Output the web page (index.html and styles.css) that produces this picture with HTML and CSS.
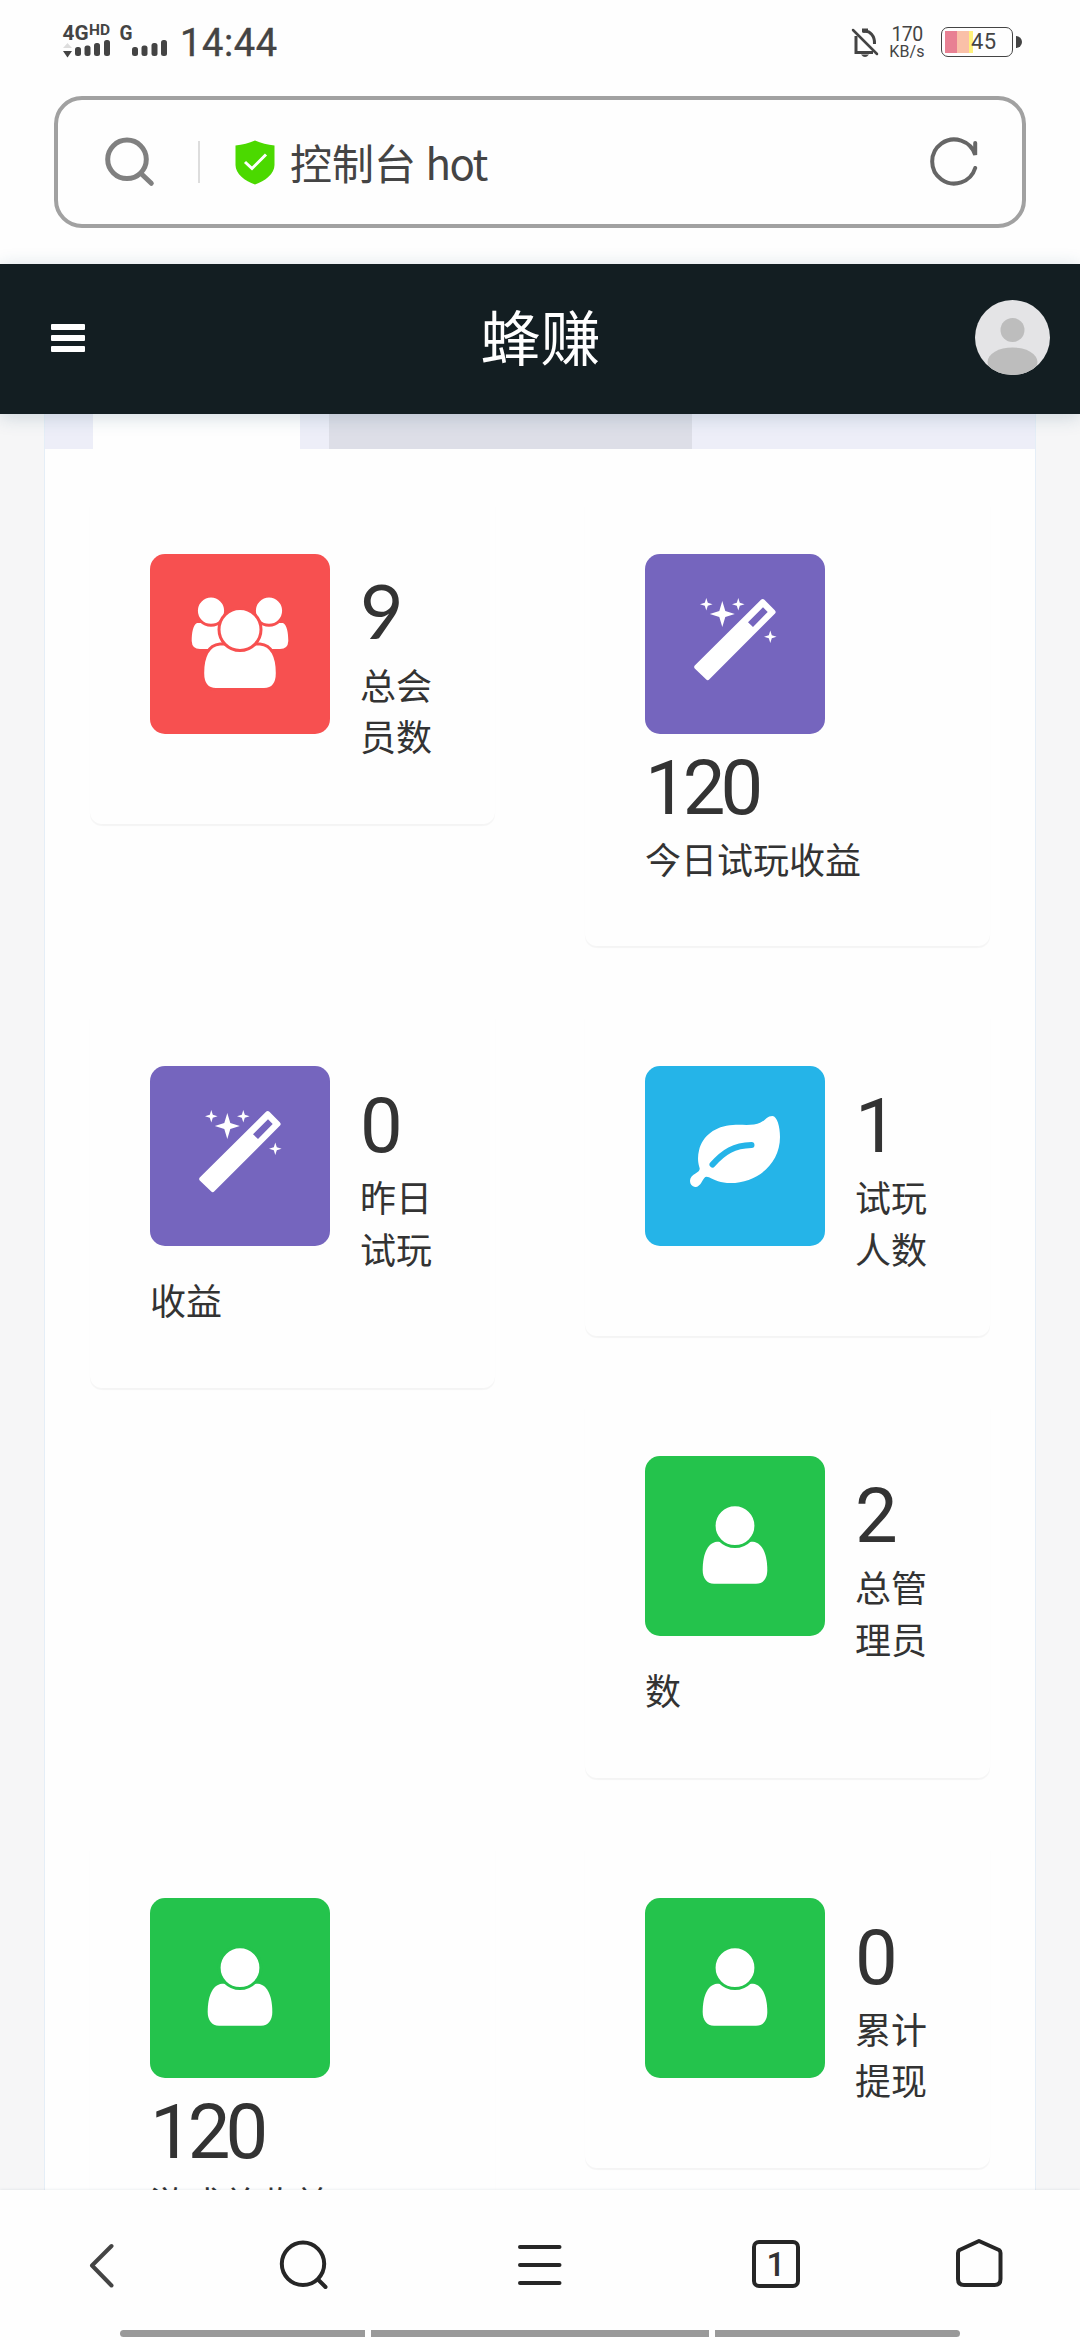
FILE: index.html
```html
<!DOCTYPE html>
<html lang="zh-CN">
<head>
<meta charset="utf-8">
<title>控制台</title>
<link rel="stylesheet" href="styles.css">
</head>
<body>
<svg class="defs" width="0" height="0" aria-hidden="true">
  <symbol id="i-user" viewBox="0 0 180 180">
    <path fill="#fff" d="M72 85.7C62 87 57.7 99 57.7 114C57.7 122 61.5 127.7 69 127.7H111C118.5 127.7 122.3 122 122.3 114C122.3 99 118 87 108 85.7Z"/>
    <circle cx="90" cy="69.7" r="20.9" fill="#fff" stroke="#24c34c" stroke-width="3"/>
  </symbol>
  <symbol id="i-users" viewBox="0 0 180 180">
    <g fill="#fff">
      <path d="M47 69C43 71 41.7 79 41.7 87Q42 95 50 95H80V69ZM133 69C137 71 138.3 79 138.3 87Q138 95 130 95H100V69Z"/>
      <g stroke="#f75050" stroke-width="3">
        <circle cx="61" cy="56.7" r="14.6"/><circle cx="119" cy="56.7" r="14.6"/>
        <path d="M70 90C58 91 52.7 103 52.7 119C52.7 129 57 135.5 66 135.5H114C123 135.5 127.3 129 127.3 119C127.3 103 122 91 110 90Z"/>
        <circle cx="90" cy="75.5" r="21"/>
      </g>
    </g>
  </symbol>
  <symbol id="i-wand" viewBox="0 0 180 180">
    <path fill="#fff" fill-rule="evenodd" d="M116 45.8Q117.7 44.2 119.4 45.8L129.8 56.2Q131.6 58 129.8 59.8L64.4 125.3Q62.7 127 61 125.3L50 114.8Q48.3 113 50 111.3ZM118 53.3L103 68.3L108 73L122.7 57.9Z"/>
    <path fill="#fff" d="M77.3 47L80.3 57L89.8 60L80.3 63L77.3 73L74.3 63L64.8 60L74.3 57ZM61.3 44L62.8 48.8L67.6 50.3L62.8 51.8L61.3 56.6L59.8 51.8L55 50.3L59.8 48.8ZM93.3 44L94.8 48.8L99.6 50.3L94.8 51.8L93.3 56.6L91.8 51.8L87 50.3L91.8 48.8ZM125.3 76.4L126.8 81.2L131.6 82.7L126.8 84.2L125.3 89L123.8 84.2L119 82.7L123.8 81.2Z"/>
  </symbol>
  <symbol id="i-leaf" viewBox="0 0 180 180">
    <path fill="#fff" d="M127.5 50C132 50.5 135 60 135 71C135 98 112 117 85.5 117C76 117 69 114 64 111.2C60 109.500 59 112 57 115.500C54.500 120 52 121.200 50 121C47 120.500 45 118 45 115C45 111.500 47 109.500 50.500 107.500C54 105.500 55.500 104 54.300 101C52.500 95 52.800 89 54 84.500C57.500 70 70 60 88 59C96 58.500 102 59.500 109 58.500C120 57.500 120 50 127.500 50Z"/>
    <path fill="none" stroke="#25b4e8" stroke-width="6" stroke-linecap="round" d="M67.500 98.500C79 85.500 89 79.500 106.500 79"/>
  </symbol>
</svg>

<header class="status">
  <svg class="signal" width="114" height="50" viewBox="60 16 114 50">
    <g class="sig-text">
      <text x="62.500" y="40" font-size="21" textLength="26" lengthAdjust="spacingAndGlyphs">4G</text>
      <text x="89" y="35" font-size="14" textLength="21" lengthAdjust="spacingAndGlyphs">HD</text>
      <text x="119.500" y="40" font-size="20" textLength="13" lengthAdjust="spacingAndGlyphs">G</text>
    </g>
    <path fill="#ddd" d="M63 48L67.500 43L72 48Z"/>
    <path fill="#444" d="M63 51H72L67.500 57.500Z"/>
    <g fill="#444">
      <rect x="75" y="47" width="6" height="9" rx="2.500"/><rect x="84.500" y="45.500" width="6" height="10.500" rx="2.500"/><rect x="94" y="43" width="6" height="13" rx="2.500"/><rect x="104" y="40" width="6" height="16" rx="2.500"/>
      <rect x="132" y="47" width="6" height="9" rx="2.500"/><rect x="141.500" y="45.500" width="6" height="10.500" rx="2.500"/><rect x="151.500" y="43" width="6" height="13" rx="2.500"/><rect x="161" y="40" width="6" height="16" rx="2.500"/>
    </g>
  </svg>
  <span class="time">14:44</span>
  <svg class="bell" width="30" height="34" viewBox="848 26 30 34" fill="none" stroke="#444" stroke-width="3">
    <path d="M854 36V52.500H871M857 33M861 31.500C868 30 873 36 872.500 44"/>
    <path d="M851 30L875 54" stroke-linecap="round" stroke-width="2.500"/>
    <path d="M860 30.500H866" stroke-width="4"/>
    <path fill="#444" stroke="none" d="M859 54.500H867Q863 59.500 859 54.500Z"/>
  </svg>
  <div class="speed"><span class="rate">170</span><span class="unit">KB/s</span></div>
  <div class="battery"><span class="charge"></span><span class="level">45</span></div>
  <span class="nub"></span>
</header>

<div class="address">
  <svg width="52" height="52" viewBox="103 136 52 52" fill="none" stroke="#808080" stroke-width="5" stroke-linecap="round">
    <circle cx="127" cy="159.300" r="19.300"/><path d="M141 173.500L151.300 183.300"/>
  </svg>
  <span class="divider"></span>
  <svg class="shield" width="40" height="45" viewBox="0 0 40 45">
    <path fill="#4bd900" d="M20 .5Q29 4.500 39.500 5.500V25C39.500 34 30 41 20 44.500C10 41 .5 34 .5 25V5.500Q11 4.500 20 .5Z"/>
    <path fill="none" stroke="#fff" stroke-width="3" d="M10 22L17 28.500L31 14.500"/>
  </svg>
  <span class="page-title">控制台 <span class="latin">hot</span></span>
  <svg width="52" height="52" viewBox="928 136 52 52" fill="none" stroke="#666" stroke-width="4" stroke-linecap="round">
    <path d="M975.200 168A22 22 0 1 1 975.200 155V143"/>
  </svg>
</div>

<div class="topbar">
  <svg width="34" height="28" viewBox="0 0 34 28" fill="#fff"><rect width="34" height="6" rx="1"/><rect y="11" width="34" height="6" rx="1"/><rect y="22" width="34" height="6" rx="1"/></svg>
  <h1 class="brand">蜂赚</h1>
  <svg width="75" height="75" viewBox="0 0 75 75">
    <clipPath id="round"><circle cx="37.500" cy="37.500" r="37.500"/></clipPath>
    <g clip-path="url(#round)"><rect width="75" height="75" fill="#e4e4e6"/><circle cx="37.500" cy="30" r="12" fill="#bdbdbd"/><ellipse cx="37.500" cy="62" rx="25" ry="14.500" fill="#bdbdbd"/></g>
  </svg>
</div>

<main class="viewport">
  <div class="panel">
    <div class="tabs"><span class="tab active"></span><span class="tab"></span></div>
    <div class="cards">
      <div class="col"><div class="card"><span class="icon red"><svg><use href="#i-users"/></svg></span><h3 class="num nine">9</h3><p>总会员数</p></div></div>
      <div class="col"><div class="card"><span class="icon purple"><svg><use href="#i-wand"/></svg></span><h3 class="num">120</h3><p>今日试玩收益</p></div></div>
      <div class="col"><div class="card"><span class="icon purple"><svg><use href="#i-wand"/></svg></span><h3 class="num">0</h3><p>昨日试玩收益</p></div></div>
      <div class="col"><div class="card"><span class="icon blue"><svg><use href="#i-leaf"/></svg></span><h3 class="num">1</h3><p>试玩人数</p></div></div>
      <div class="col"><div class="card"><span class="icon green"><svg><use href="#i-user"/></svg></span><h3 class="num">2</h3><p>总管理员数</p></div></div>
      <div class="col"><div class="card"><span class="icon green"><svg><use href="#i-user"/></svg></span><h3 class="num">120</h3><p>游戏总收益</p></div></div>
      <div class="col"><div class="card"><span class="icon green"><svg><use href="#i-user"/></svg></span><h3 class="num">0</h3><p>累计提现</p></div></div>
    </div>
  </div>
</main>

<footer class="bottom">
  <nav class="nav">
    <svg width="60" height="60" viewBox="71 2235 60 60" stroke="#444"><path d="M111.500 2246L92 2265.500L111.500 2285.500"/></svg>
    <svg width="60" height="60" viewBox="273 2235 60 60"><circle cx="303" cy="2263.800" r="21.200"/><path d="M318 2279.500L325.500 2287"/></svg>
    <svg width="60" height="60" viewBox="510 2235 60 60"><path d="M520 2247H559.500M520 2265H559.500M520 2283H559.500"/></svg>
    <span class="tab-count">1</span>
    <svg width="60" height="60" viewBox="949 2235 60 60"><path d="M979 2241L999 2250Q1000.500 2251 1000.500 2253V2279Q1000.500 2285 994.500 2285H964Q958 2285 958 2279V2253Q958 2251 959.500 2250Z"/></svg>
  </nav>
  <div class="gesture"><span></span><span></span><span></span></div>
</footer>
</body>
</html>
```
FILE: styles.css
```css
* { box-sizing: border-box; }
body {
  margin: 0;
  width: 1080px;
  height: 2340px;
  overflow: hidden;
  display: flex;
  flex-direction: column;
  background: #fefefe;
  color: #333;
  font-family: Roboto, "Noto Sans CJK SC", sans-serif;
}
svg { display: block; flex: none; }
.defs { position: absolute; }

/* Phone status bar */
.status {
  height: 96px;
  flex: none;
  display: flex;
  align-items: flex-start;
  padding: 16px 58px 0 60px;
  color: #444;
}
.sig-text { fill: #444; font-weight: 700; font-family: Roboto, sans-serif; }
.time { margin: 5px 0 0 6px; font-size: 38px; line-height: 44px; width: 100px; letter-spacing: .6px; -webkit-text-stroke: .4px #444; }
.bell { margin: 10px 0 0 auto; }
.speed { width: 36px; margin: 11px 0 0 9px; display: flex; flex-direction: column; align-items: center; }
.rate { font-size: 19.500px; line-height: 15px; letter-spacing: -.6px; }
.unit { font-size: 16px; line-height: 14px; margin-top: 3px; letter-spacing: .2px; }
.battery {
  width: 72px;
  height: 30px;
  margin: 11px 3px 0 16px;
  border: 1.500px solid #444;
  border-radius: 7px;
  display: flex;
  align-items: center;
  padding-left: 3px;
}
.charge { width: 28px; height: 22px; background: linear-gradient(90deg, #e88093 12px, #fac0a8 12px 24px, #fff27c 24px); }
.level { font-size: 22px; line-height: 26px; margin: -1px 0 0 -2px; letter-spacing: .5px; }
.nub { width: 6px; height: 12px; margin-top: 20px; background: #444; border-radius: 0 6px 6px 0; }

/* Browser address bar */
.address {
  flex: none;
  height: 132px;
  margin: 0 54px 36px;
  padding: 0 42px 0 45px;
  border: 4px solid #a1a1a1;
  border-radius: 28px;
  display: flex;
  align-items: center;
}
.divider { width: 2px; height: 42px; margin: 0 35px 0 43px; background: #ddd; }
.page-title {
  flex: 1;
  margin-left: 15px;
  color: #444;
  font: 42px/60px "Noto Sans CJK SC", sans-serif;
}
.latin { letter-spacing: -1.500px; }

/* Site header */
.topbar {
  flex: none;
  height: 150px;
  padding: 0 30px 3px 51px;
  background: #131e22;
  box-shadow: 0 3px 18px rgba(30, 80, 110, .2);
  display: flex;
  align-items: center;
  justify-content: space-between;
  position: relative;
  z-index: 1;
}
.brand { margin: 0 0 0 21px; padding-bottom: 6px; color: #fff; font: 400 60px/80px "Noto Sans CJK SC", sans-serif; }

/* Dashboard */
.viewport { flex: 1; min-height: 0; overflow: hidden; background: #f6f6f7; padding: 0 44px; }
.panel { height: 1900px; background: #fefefe; border: solid #e5eef7; border-width: 0 1px; }
.tabs { height: 35px; background: #edeef8; display: flex; gap: 29px; padding-left: 48px; }
.tab { width: 363px; background: #dddee7; }
.tab.active { width: 207px; background: #fefefe; }
.cards { padding-top: 45px; }
.col { float: left; width: 495px; padding: 0 45px; margin-bottom: 60px; }
.card {
  padding: 60px;
  border-radius: 12px;
  background: #fefefe;
  box-shadow: 0 2px 1px rgba(0, 0, 0, .04);
}
.icon { float: left; width: 180px; height: 180px; margin-right: 30px; border-radius: 15px; }
.icon svg { width: 180px; height: 180px; }
.red { background: #f75050; }
.purple { background: #7565be; }
.blue { background: #25b4e8; }
.green { background: #24c34c; }
.card p {
  margin: 0 0 2px;
  font: 36px/51.430px "Noto Sans CJK SC", sans-serif;
}
.num { margin: 0 0 -10px; padding-top: 6px; font-size: 76px; line-height: 109px; font-weight: 400; letter-spacing: -5px; }
.nine { font-family: Lato, sans-serif; font-size: 75px; line-height: 100px; margin-bottom: -1px; }

/* Browser toolbar */
.bottom { flex: none; height: 150px; background: #fefefe; box-shadow: 0 0 3px rgba(40, 60, 90, .13); z-index: 1; }
.nav {
  height: 140px;
  padding-top: 45px;
  display: grid;
  grid-template-columns: 202px 202px 272px 200px 206px;
  justify-items: center;
  align-items: start;
}
.nav svg { fill: none; stroke-width: 4; stroke-linecap: round; stroke-linejoin: round; }
.nav svg:not([stroke]) { stroke: #262626; }
.tab-count {
  width: 48px;
  height: 48px;
  margin-top: 5px;
  border: 4px solid #262626;
  border-radius: 7px;
  font-size: 33px;
  font-weight: 500;
  line-height: 41px;
  text-align: center;
}
.gesture { display: flex; gap: 6px; padding: 0 120px; }
.gesture span { height: 7px; flex: 245; background: #999; }
.gesture span:nth-child(2) { flex: 338; }
.gesture span:first-child { border-radius: 4px 0 0 4px; }
.gesture span:last-child { border-radius: 0 4px 4px 0; }
```
